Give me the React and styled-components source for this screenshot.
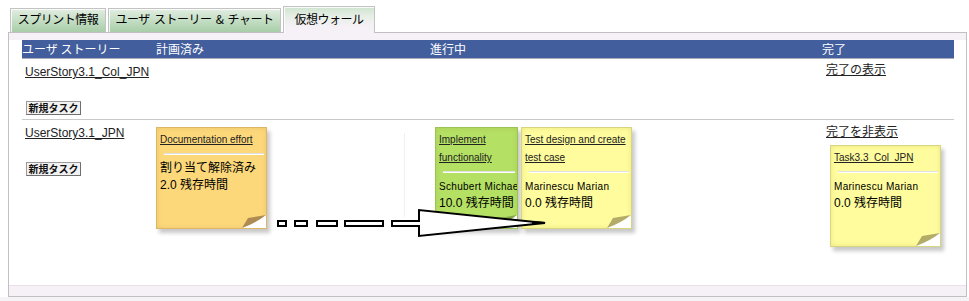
import React from 'react';
import styled, { createGlobalStyle } from 'styled-components';

const GlobalStyle = createGlobalStyle`
  html, body {
    margin: 0;
    padding: 0;
    background: #fff;
  }
  body {
    font-family: "Liberation Sans", "Noto Sans CJK JP", sans-serif;
    font-size: 12px;
    color: #000;
  }
`;

const COLS = '134px 274px 392px 1fr';

const Page = styled.div`
  padding: 6px 2px 0 8px;
`;

const TabBar = styled.div`
  display: flex;
  align-items: flex-end;
  gap: 2px;
  height: 26px;
  padding-left: 2px;
`;

const Tab = styled.div`
  box-sizing: border-box;
  width: ${({ $w }) => $w}px;
  height: ${({ $active }) => ($active ? 27 : 24)}px;
  margin-bottom: ${({ $active }) => ($active ? -1 : 0)}px;
  padding-top: ${({ $active }) => ($active ? 2 : 0)}px;
  position: relative;
  z-index: ${({ $active }) => ($active ? 2 : 0)};
  border: 1px solid #c3c3c3;
  border-bottom: none;
  box-shadow: inset 1px 1px 0 rgba(255, 255, 255, 0.8);
  background: ${({ $active }) =>
    $active
      ? 'linear-gradient(to bottom, #cfe4cf 0%, #e6eee6 35%, #f6f1f6 75%)'
      : 'linear-gradient(to bottom, #e2ede2 0%, #c4dec4 50%, #a8cda8 100%)'};
  font-family: "Noto Sans CJK JP", sans-serif;
  font-size: 12px;
  letter-spacing: -0.5px;
  word-spacing: 2px;
  line-height: 20px;
  text-align: center;
  white-space: nowrap;
  color: #000;
`;

const Panel = styled.div`
  border: 1px solid #c2bec2;
  background: #f6f1f6;
  padding: 7px 0 10px;
`;

const Board = styled.div`
  background: #fff;
  height: 245px;
  border-bottom: 1px solid #e8e1e8;
  padding: 0 12px 0 13px;
`;

const HeaderRow = styled.div`
  display: grid;
  grid-template-columns: ${COLS};
  height: 18px;
  line-height: 18px;
  background: #425e9d;
  border-bottom: 1px solid #a9adb9;
  color: #fff;
  font-family: "Noto Sans CJK JP", sans-serif;
  font-size: 12px;
  white-space: nowrap;
`;

const Row = styled.div`
  display: grid;
  grid-template-columns: ${COLS};
  position: relative;
  height: ${({ $h }) => ($h ? `${$h}px` : 'auto')};
  border-bottom: ${({ $divider }) => ($divider ? '1px solid #c9c9c9' : 'none')};
`;

const Cell = styled.div`
  position: relative;
  padding-top: ${({ $top = 0 }) => $top}px;
  padding-left: ${({ $left = 0 }) => $left}px;
  display: ${({ $flex }) => ($flex ? 'flex' : 'block')};
  align-items: flex-start;
  gap: 3px;
  min-width: 0;
`;

const DropLine = styled.div`
  position: absolute;
  left: 248px;
  top: 13px;
  width: 1px;
  height: 84px;
  background: #f0f0f0;
`;

const StoryLink = styled.a`
  display: inline-block;
  color: #222;
  text-decoration: underline;
  font-size: 12px;
  line-height: 16px;
  white-space: nowrap;
`;

const TaskButton = styled.button`
  display: block;
  box-sizing: border-box;
  width: 55px;
  height: 14px;
  margin: 21px 0 0 1px;
  padding: 0;
  border: 1px solid #9a9a9a;
  border-right-color: #6f6f6f;
  border-bottom-color: #6f6f6f;
  background: #f2f2f2;
  font-family: "Noto Sans CJK JP", sans-serif;
  font-size: 10px;
  font-weight: bold;
  line-height: 12px;
  color: #111;
`;

const NOTE_COLORS = {
  orange: { bg: '#fdd87b', edge: '#dcb767', fold: '#ae8b52' },
  green: { bg: '#b4e064', edge: '#9cc452', fold: '#86a64c' },
  yellow: { bg: '#fefc9c', edge: '#d8d57e', fold: '#b3ac68' },
};

const Note = styled.div`
  position: relative;
  flex: none;
  box-sizing: border-box;
  width: ${({ $w = 111 }) => $w}px;
  height: 102px;
  margin: ${({ $m = '0' }) => $m};
  padding: 3px 0 0 3px;
  background: ${({ $c }) => NOTE_COLORS[$c].bg};
  border: 1px solid ${({ $c }) => NOTE_COLORS[$c].edge};
  box-shadow: 3px 4px 4px rgba(0, 0, 0, 0.22), inset 0 0 5px rgba(120, 100, 0, 0.15);
  overflow: hidden;
`;

const NoteTitle = styled.a`
  display: block;
  color: #222;
  text-decoration: underline;
  font-size: 10px;
  line-height: 18px;
`;

const NoteRule = styled.div`
  height: 1px;
  margin: 4px 2px 5px 4px;
  background: #fff;
  border-top: 1px solid rgba(0, 0, 0, 0.12);
`;

const NoteLine = styled.div`
  font-size: ${({ $big }) => ($big ? 12 : 10)}px;
  letter-spacing: ${({ $big }) => ($big ? 0 : 0.3)}px;
  line-height: 17px;
  white-space: nowrap;
`;

const Fold = styled.svg`
  position: absolute;
  right: 0;
  bottom: 0;
  display: block;
`;

const Overlay = styled.svg`
  position: absolute;
  left: 248px;
  top: 85px;
  z-index: 3;
  overflow: visible;
`;

const BottomStrip = styled.div`
  height: 4px;
  background: #f6f3f6;
`;

const StickyNote = ({ color, width, margin, title, lines }) => (
  <Note $c={color} $w={width} $m={margin}>
    <NoteTitle href="#!">{title}</NoteTitle>
    <NoteRule />
    {lines.map((l, i) => (
      <NoteLine key={i} $big={l.big}>{l.text}</NoteLine>
    ))}
    <Fold width="24" height="13" viewBox="0 0 24 13">
      <polygon points="0,13 24,0 24,13" fill="#fff" />
      <path d="M0 13 L6 3 L24 0 Q14 8 0 13 Z" fill={NOTE_COLORS[color].fold} />
    </Fold>
  </Note>
);

const Arrow = () => (
  <Overlay width="280" height="40" viewBox="0 0 280 40">
    <g fill="#fff" stroke="#000" strokeWidth="2">
      <rect x="8" y="16" width="8" height="5" />
      <rect x="25" y="16" width="12" height="5" />
      <rect x="47" y="16" width="20" height="5" />
      <rect x="75" y="16" width="38" height="5" />
      <polygon points="122,16 149,16 149,5 275,18 149,31 149,21 122,21" />
    </g>
    <polygon points="262,16 276,17 262,20" fill="#000" />
  </Overlay>
);

const App = () => (
  <>
    <GlobalStyle />
    <Page>
      <TabBar>
        <Tab $w={96}>スプリント情報</Tab>
        <Tab $w={173}>ユーザ ストーリー &amp; チャート</Tab>
        <Tab $w={92} $active>仮想ウォール</Tab>
      </TabBar>
      <Panel>
        <Board>
          <HeaderRow>
            <div>ユーザ ストーリー</div>
            <div>計画済み</div>
            <div>進行中</div>
            <div>完了</div>
          </HeaderRow>

          <Row $divider $h={60}>
            <Cell $top={5} $left={3}>
              <StoryLink href="#!">UserStory3.1_Col_JPN</StoryLink>
              <TaskButton>新規タスク</TaskButton>
            </Cell>
            <Cell />
            <Cell />
            <Cell $top={3} $left={4}>
              <StoryLink href="#!">完了の表示</StoryLink>
            </Cell>
          </Row>

          <Row>
            <Cell $top={5} $left={3}>
              <StoryLink href="#!">UserStory3.1_JPN</StoryLink>
              <TaskButton>新規タスク</TaskButton>
            </Cell>
            <Cell $top={7}>
              <StickyNote
                color="orange"
                title="Documentation effort"
                lines={[
                  { text: '割り当て解除済み', big: true },
                  { text: '2.0 残存時間', big: true },
                ]}
              />
              <DropLine />
            </Cell>
            <Cell $top={7} $left={5} $flex>
              <StickyNote
                color="green"
                width={83}
                title="Implement functionality"
                lines={[
                  { text: 'Schubert Michael' },
                  { text: '10.0 残存時間', big: true },
                ]}
              />
              <StickyNote
                color="yellow"
                title="Test design and create test case"
                lines={[
                  { text: 'Marinescu Marian' },
                  { text: '0.0 残存時間', big: true },
                ]}
              />
            </Cell>
            <Cell $top={4} $left={4}>
              <StoryLink href="#!">完了を非表示</StoryLink>
              <StickyNote
                color="yellow"
                margin="5px 0 0 4px"
                title="Task3.3_Col_JPN"
                lines={[
                  { text: 'Marinescu Marian' },
                  { text: '0.0 残存時間', big: true },
                ]}
              />
            </Cell>
            <Arrow />
          </Row>
        </Board>
      </Panel>
    </Page>
    <BottomStrip />
  </>
);

export default App;
